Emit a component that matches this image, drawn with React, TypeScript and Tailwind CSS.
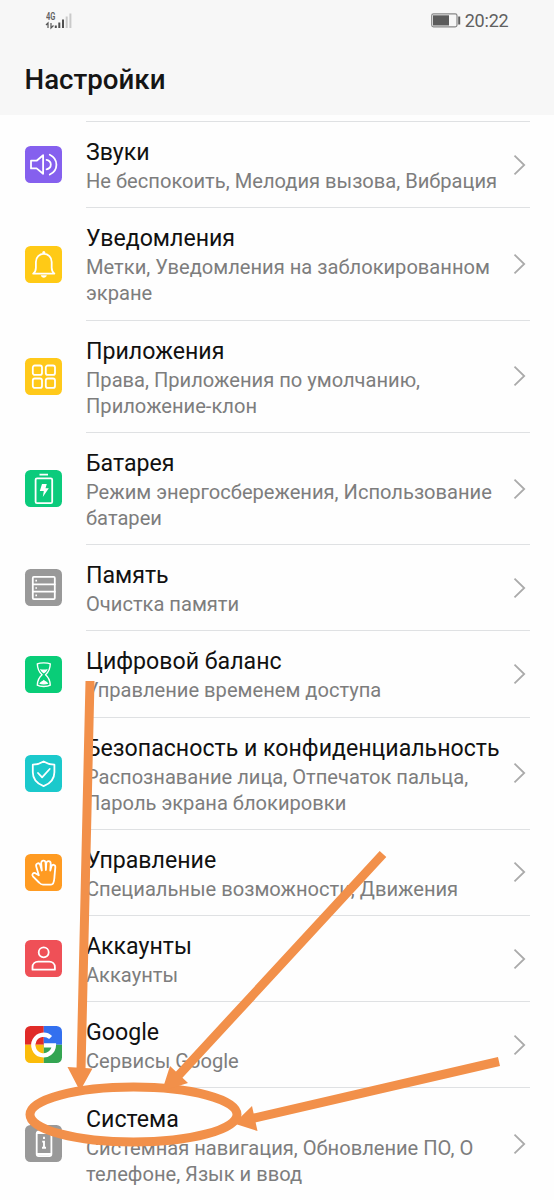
import type { ReactNode } from "react";

type Row = { title: string; lines: string[]; color: string; icon: ReactNode };

const rows: Row[] = [
  {
    title: "Звуки",
    lines: ["Не беспокоить, Мелодия вызова, Вибрация"],
    color: "bg-[#8560ee]",
    icon: (
      <>
        <path d="M6 14.7h5.6L18.1 9.2v18.6l-6.5-5.4H6z" />
        <path d="M21.6 13.8c5.6 1.3 5.6 8.3 0 9.6M24.8 8.7c8.8 4.3 8.8 15.6 0 19.8" />
      </>
    ),
  },
  {
    title: "Уведомления",
    lines: ["Метки, Уведомления на заблокированном", "экране"],
    color: "bg-[#ffca16]",
    icon: (
      <>
        <path d="M8.2 27.6h21.2c-2-1.6-2.7-3.1-2.7-5.8v-5.9c0-4.7-3.5-8-7.9-8s-7.9 3.3-7.9 8v5.9c0 2.7-.7 4.2-2.7 5.8z" />
        <circle cx="18.8" cy="6.5" r="1.5" fill="white" stroke="none" />
        <path d="M15.8 29.3h6c-.5 3.3-5.5 3.3-6 0z" fill="white" stroke="none" />
      </>
    ),
  },
  {
    title: "Приложения",
    lines: ["Права, Приложения по умолчанию,", "Приложение-клон"],
    color: "bg-[#ffc91a]",
    icon: (
      <>
        <rect x="7.8" y="7.5" width="9.2" height="9.4" rx="2" />
        <rect x="20.8" y="7.5" width="9.2" height="9.4" rx="2" />
        <rect x="7.8" y="20.5" width="9.2" height="9.4" rx="2" />
        <rect x="20.8" y="20.5" width="9.2" height="9.4" rx="2" />
      </>
    ),
  },
  {
    title: "Батарея",
    lines: ["Режим энергосбережения, Использование", "батареи"],
    color: "bg-[#0bcb7c]",
    icon: (
      <>
        <rect x="10.6" y="8.3" width="16.6" height="24.8" rx="1.4" />
        <path d="M14.5 4.6h8.5" strokeLinecap="butt" strokeWidth="1.9" />
        <path d="M17 14h4.8l-1.3 4.2h3.3l-6 8.7 1-6h-4z" fill="white" stroke="none" />
      </>
    ),
  },
  {
    title: "Память",
    lines: ["Очистка памяти"],
    color: "bg-[#999999]",
    icon: (
      <>
        <rect x="7.8" y="7.9" width="22" height="22.2" rx="1" />
        <path d="M8 15.3h21.8M8 22.7h21.8" />
        <path d="M10.4 11.6h1.6M10.4 19h1.6M10.4 26.4h1.6" strokeWidth="1.6" strokeLinecap="butt" />
      </>
    ),
  },
  {
    title: "Цифровой баланс",
    lines: ["Управление временем доступа"],
    color: "bg-[#09cd78]",
    icon: (
      <>
        <path strokeWidth="1.4" d="M12.3 7.8c2.8-1.2 10.2-1.2 13 0-.2 5.4-1.8 8.5-4.8 10.9 3 2.4 4.6 5.4 4.8 10.5-2.8 1.8-10.2 1.8-13 0 .2-5.1 1.8-8.1 4.8-10.5-3-2.4-4.6-5.5-4.8-10.9z" />
        <path d="M15 13c2.2.8 5.4.8 7.7 0-.6 1.8-1.9 3.2-3.8 4.6-2-1.4-3.3-2.8-3.9-4.6zM14.3 27.8c.6-2.3 3.5-2.3 4.5-4 1 1.7 3.9 1.7 4.5 4-2.6.9-6.4.9-9 0z" fill="white" stroke="none" />
      </>
    ),
  },
  {
    title: "Безопасность и конфиденциальность",
    lines: ["Распознавание лица, Отпечаток пальца,", "Пароль экрана блокировки"],
    color: "bg-[#1bc9cc]",
    icon: (
      <>
        <path d="M18.6 6.4c3.3 2.1 6.7 3 10.8 3.3v7.5c0 7-3.7 11.2-10.8 14-7.1-2.8-10.8-7-10.8-14V9.7c4.1-.3 7.5-1.2 10.8-3.3z" />
        <path d="m13 18 4.1 4.4 7.6-8.4" />
      </>
    ),
  },
  {
    title: "Управление",
    lines: ["Специальные возможности, Движения"],
    color: "bg-[#ff9b22]",
    icon: (
      <path d="M13.800 21.200 11.300 12.800C10.300 9.200 13.900 8.200 15.100 10.800L16.800 16.500 16.200 9.300C16 5.900 20.400 5.900 20.600 9L20.900 16 21.300 9.300C21.500 6.200 25.800 6.400 25.700 9.700L25.300 16.500 26.400 12.600C27.200 9.700 30.600 10.400 30.300 13.300L29.500 22.200C29.200 25.600 29.500 30.700 26 30.700H18C16.100 30.700 15.200 29.800 14 28.500L7.900 22.300C6.400 20.300 8.200 18.500 10.300 19.200L13.800 21.200Z" />
    ),
  },
  {
    title: "Аккаунты",
    lines: ["Аккаунты"],
    color: "bg-[#ef5057]",
    icon: (
      <>
        <circle cx="18.7" cy="12.3" r="5" />
        <path d="M7.5 29.7v-2.5c0-3.2 2.5-5.5 5.7-5.5h11c3.2 0 5.7 2.3 5.7 5.5v2.5z" />
      </>
    ),
  },
  {
    title: "Google",
    lines: ["Сервисы Google"],
    color: "bg-white",
    icon: (
      <g stroke="none">
        <path d="M0 0h18.8v18.8H0z" fill="#e02b28" />
        <path d="M18.8 0h19v18.8h-19z" fill="#3370ef" />
        <path d="M0 18.8h18.8V38H0z" fill="#fbbc0a" />
        <path d="M18.8 18.8h19V38h-19z" fill="#34a552" />
        <path d="M25.6 11.5A10.3 10.3 0 1 0 28.9 19.3H19" fill="none" stroke="white" strokeWidth="4.300" strokeLinecap="butt" strokeLinejoin="miter" />
      </g>
    ),
  },
  {
    title: "Система",
    lines: ["Системная навигация, Обновление ПО, О", "телефоне, Язык и ввод"],
    color: "bg-[#999999]",
    icon: (
      <>
        <rect x="11.7" y="6.5" width="14.7" height="24.6" rx="2" strokeWidth="1.8" />
        <path d="M12.5 7.8h13M12.5 29.2h13" strokeWidth="2.4" />
        <path d="M19 11.8v2.2M17.2 16.6H19v6M17 22.8h4" strokeWidth="1.9" strokeLinecap="butt" strokeLinejoin="miter" />
      </>
    ),
  },
];

function StatusBar() {
  return (
    <div className="flex h-[41px] items-center justify-between pr-[45.500px] pl-[45px] text-[#606060]">
      <div className="relative h-[18px] w-[28px]">
        <span className="absolute top-0 left-[1px] origin-left scale-x-75 text-[10px] leading-[9px] font-semibold">4G</span>
        <svg className="absolute inset-0" width="28" height="18" fill="none">
          <path d="M1 13l2-2V16M6 11V16l2.500-2.500" stroke="#555" strokeWidth="1.200" />
          <path d="M10.800 16v-2.500M14.300 16v-5.500M18 16V7.500" stroke="#505050" strokeWidth="2" />
          <path d="M21.700 16V4.500M25.400 16V1.500" stroke="#cacaca" strokeWidth="2" />
        </svg>
      </div>
      <div className="flex items-center gap-[4px]">
        <svg width="30" height="15" viewBox="0 0 30 15" fill="none">
          <rect x=".7" y=".9" width="25.300" height="12.900" rx="1.800" stroke="#888" strokeWidth="1.200" />
          <rect x="2" y="2.300" width="16" height="10.200" fill="#5c5c5c" />
          <path d="M28.200 3.500v8" stroke="#606060" strokeWidth="2" />
        </svg>
        <span className="pt-px text-[18px] leading-[20px] tracking-[-0.200px]">20:22</span>
      </div>
    </div>
  );
}

function SettingsRow({ row, last }: { row: Row; last: boolean }) {
  return (
    <div className={`flex shrink-0 items-center ${row.lines.length === 2 ? "h-[112.300px]" : "h-[86.150px]"}`}>
      <div className={`mb-px ml-[24.500px] h-[37px] w-[37.500px] shrink-0 overflow-hidden rounded-[5.500px] ${row.color}`}>
        <svg width="37.500" height="37" viewBox="0 0 37.500 37" fill="none" stroke="white" strokeWidth="1.800" strokeLinecap="round" strokeLinejoin="round">
          {row.icon}
        </svg>
      </div>
      <div className={`ml-[24px] flex h-full w-[443.500px] items-center justify-between ${last ? "" : "border-b border-[#dfe1e3]"}`}>
        <div className="pt-[2.500px] whitespace-nowrap">
          <div className="text-[23.150px] leading-[30px] text-[#111]">{row.title}</div>
          <div className="text-[20.120px] leading-[26px] text-[#7d7d7d]">
            {row.lines.map((line) => (
              <div key={line}>{line}</div>
            ))}
          </div>
        </div>
        <svg className="mr-[3.500px] -ml-4 shrink-0" width="13" height="22" viewBox="0 0 13 22" fill="none" stroke="#aaa" strokeWidth="1.800">
          <path d="m1.500 1.700 9.700 9.300-9.700 9.300" />
        </svg>
      </div>
    </div>
  );
}

export default function App() {
  return (
    <div className="relative flex h-[1200px] w-[554px] flex-col overflow-hidden bg-[#fefefe] font-['Roboto',sans-serif]">
      <header className="h-[115px] shrink-0 bg-[#f7f7f7]">
        <StatusBar />
        <h1 className="ml-[24.500px] pt-[21px] text-[27.700px] leading-[36px] font-medium text-[#151515]">Настройки</h1>
      </header>
      <div className="ml-[86px] h-[7.300px] w-[443.500px] shrink-0 border-b border-[#dfe1e3]" />
      <main className="flex flex-col">
        {rows.map((row, i) => (
          <SettingsRow key={row.title} row={row} last={i === rows.length - 1} />
        ))}
      </main>
      <svg className="pointer-events-none absolute inset-0" width="554" height="1200" fill="none">
        <ellipse cx="133.500" cy="1114.500" rx="103.500" ry="27.500" stroke="#f2904a" strokeWidth="9" />
        <path d="M90 681 81 1070M383 854 178 1076M499 1061.500 252 1118.500" stroke="#f2904a" strokeWidth="9" />
        <path d="M67.500 1067 92.500 1068.500 80 1091zM170 1066 188 1083 162 1091zM252 1106 257.500 1131 234 1123.500z" fill="#f2904a" />
      </svg>
    </div>
  );
}
